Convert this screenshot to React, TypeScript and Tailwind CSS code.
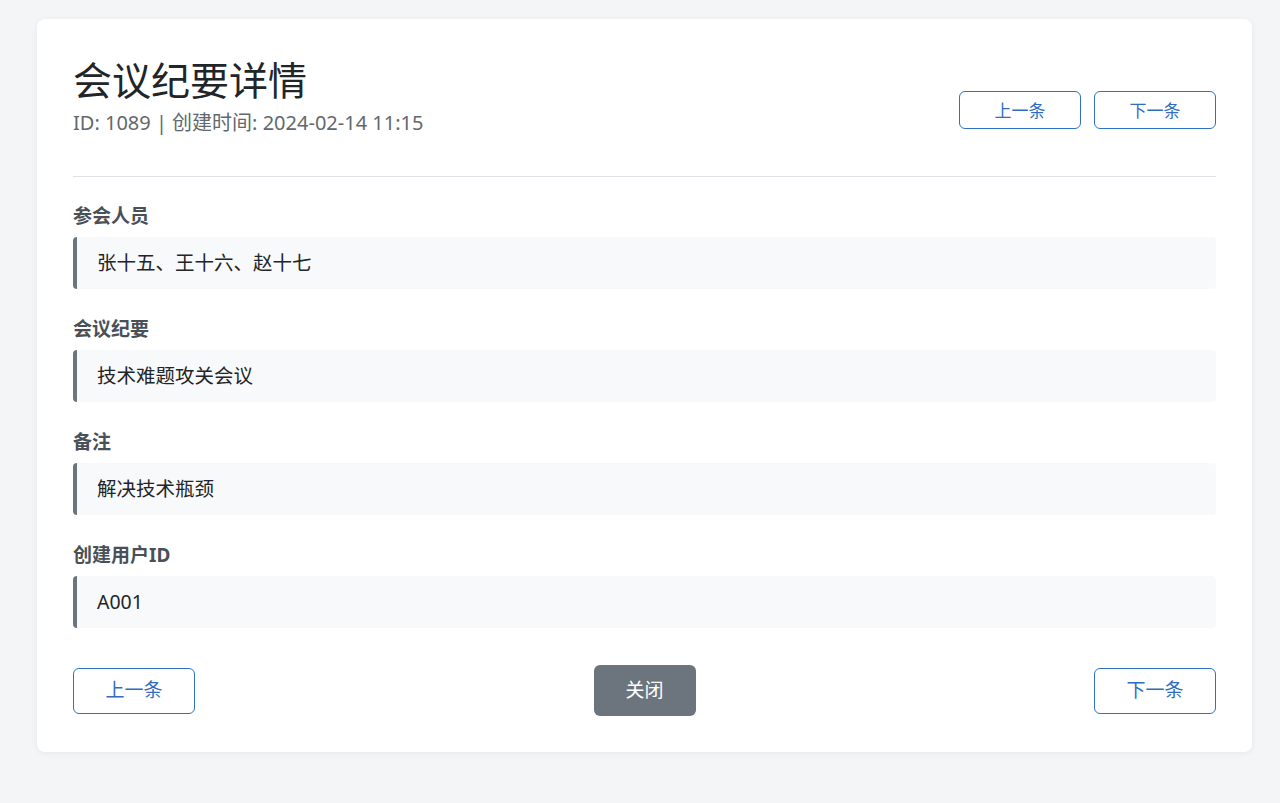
const fields = [
  { label: "参会人员", value: "张十五、王十六、赵十七" },
  { label: "会议纪要", value: "技术难题攻关会议" },
  { label: "备注", value: "解决技术瓶颈" },
  { label: "创建用户ID", value: "A001" },
];

function NavButton({ children, size }: { children: string; size: "sm" | "lg" }) {
  const cls =
    size === "sm"
      ? "h-[38px] w-[122px] text-[17px]"
      : "h-[46px] w-[122px] text-[19px]";
  return (
    <button
      className={`${cls} rounded-md border-[1.5px] border-[#3070c8] bg-white text-[#2f6cc2] leading-none`}
    >
      {children}
    </button>
  );
}

export default function App() {
  return (
    <div
      className="min-h-screen bg-[#f4f5f7] pt-[19px] pl-[37px] pr-[28px]"
      style={{ fontFamily: '"Noto Sans", "Noto Sans CJK SC", sans-serif' }}
    >
      <div className="w-[1215px] rounded-lg bg-white px-[36px] pt-[37px] pb-[36px] shadow-[0_1px_6px_rgba(0,0,0,0.06)]">
        {/* header */}
        <div className="flex items-end justify-between border-b border-[#dee2e6] pb-[38px]">
          <div>
            <h1 className="text-[39px] leading-[48px] text-[#212529]">会议纪要详情</h1>
            <p className="mt-[4px] text-[20px] leading-[30px] text-[#62686e]">
              ID: 1089 | 创建时间: 2024-02-14 11:15
            </p>
          </div>
          <div className="mb-[9px] flex gap-[13px]">
            <NavButton size="sm">上一条</NavButton>
            <NavButton size="sm">下一条</NavButton>
          </div>
        </div>

        {/* fields */}
        <div className="mt-[26px]">
          {fields.map((f) => (
            <div key={f.label} className="mb-[27px]">
              <div className="text-[19px] font-bold leading-[27px] text-[#495057]">{f.label}</div>
              <div className="mt-[7px] flex h-[52px] items-center rounded-[4px] border-l-4 border-[#6c757d] bg-[#f8f9fa] pl-[20px] text-[19.5px] text-[#212529]">
                {f.value}
              </div>
            </div>
          ))}
        </div>

        {/* footer */}
        <div className="mt-[37px] flex items-center justify-between">
          <NavButton size="lg">上一条</NavButton>
          <button className="h-[51px] w-[102px] rounded-md bg-[#6c757d] text-[19px] text-white">
            关闭
          </button>
          <NavButton size="lg">下一条</NavButton>
        </div>
      </div>
    </div>
  );
}
